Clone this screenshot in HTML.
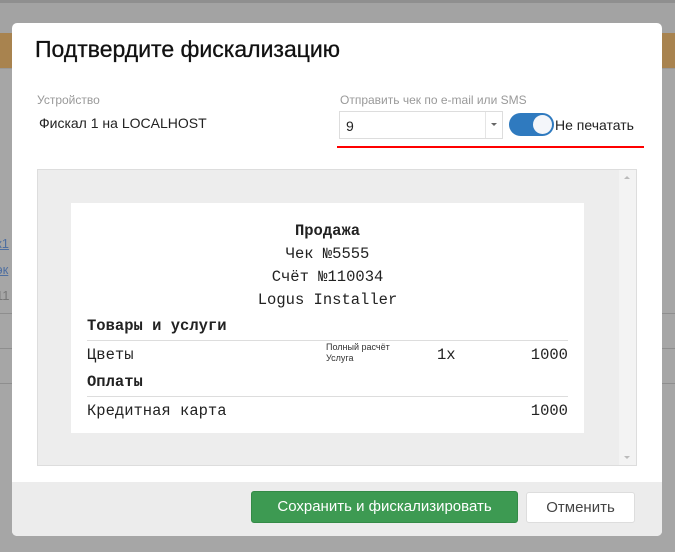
<!DOCTYPE html>
<html><head><meta charset="utf-8"><style>
*{box-sizing:border-box;margin:0;padding:0}
body{width:675px;height:552px;background:#a6a6a6;position:relative;overflow:hidden;font-family:"Liberation Sans","DejaVu Sans",sans-serif}
.abs{position:absolute}
.mono{font-family:"Courier New","Liberation Mono","DejaVu Sans Mono",monospace;font-size:15.5px;color:#222}
</style></head><body>
<div class="abs" style="left:0;top:0;width:675px;height:3px;background:#8f8f8f"></div>
<div class="abs" style="left:0;top:3px;width:675px;height:30px;background:#a3a3a3"></div>
<div class="abs" style="left:0;top:33px;width:675px;height:35px;background:#a8834f"></div>
<div class="abs" style="left:0;top:68px;width:675px;height:1px;background:#999"></div>
<div class="abs" style="left:0;top:313px;width:675px;height:1px;background:#8e8e8e"></div>
<div class="abs" style="left:0;top:348px;width:675px;height:1px;background:#8e8e8e"></div>
<div class="abs" style="left:0;top:383px;width:675px;height:1px;background:#8e8e8e"></div>
<div class="abs" style="left:-4px;top:236px;font-size:13px;color:#4f6fa0;text-decoration:underline">к1</div>
<div class="abs" style="left:-4px;top:262px;font-size:13px;color:#4f6fa0;text-decoration:underline">эк</div>
<div class="abs" style="left:-4px;top:288px;font-size:13px;color:#777">11</div>

<div class="abs" style="left:12px;top:23px;width:650px;height:513px;background:#fff;border-radius:5px;overflow:hidden">
  <div class="abs" style="left:23px;top:13px;font-size:23px;color:#111;-webkit-text-stroke:0.3px #111">Подтвердите фискализацию</div>
  <div class="abs" style="left:25px;top:70px;font-size:12px;color:#999">Устройство</div>
  <div class="abs" style="left:27px;top:92px;font-size:14px;color:#222">Фискал 1 на LOCALHOST</div>
  <div class="abs" style="left:328px;top:70px;font-size:12px;color:#999">Отправить чек по e-mail или SMS</div>
  <div class="abs" style="left:327px;top:88px;width:164px;height:28px;border:1px solid #ddd;background:#fff">
    <div class="abs" style="left:6px;top:6px;font-size:14px;color:#222">9</div>
    <div class="abs" style="left:145px;top:0;width:1px;height:26px;background:#e5e5e5"></div>
    <div class="abs" style="left:151px;top:11px;width:0;height:0;border-left:3px solid transparent;border-right:3px solid transparent;border-top:3px solid #666"></div>
  </div>
  <div class="abs" style="left:497px;top:90px;width:45px;height:23px;border-radius:12px;background:#2f7abf">
    <div class="abs" style="left:24px;top:2px;width:19px;height:19px;border-radius:50%;background:#f4f6fa"></div>
  </div>
  <div class="abs" style="left:543px;top:94px;font-size:14px;color:#222">Не печатать</div>
  <div class="abs" style="left:325px;top:123px;width:307px;height:2px;background:#f00"></div>

  <div class="abs" style="left:25px;top:146px;width:600px;height:297px;background:#ededed;border:1px solid #ddd">
    <div class="abs" style="right:0;top:0;width:17px;height:295px;background:#f3f3f3"></div>
    <div class="abs" style="right:6px;top:6px;border-left:3px solid transparent;border-right:3px solid transparent;border-bottom:3px solid #bbb"></div>
    <div class="abs" style="right:6px;bottom:6px;border-left:3px solid transparent;border-right:3px solid transparent;border-top:3px solid #bbb"></div>
    <div class="abs" style="left:33px;top:33px;width:513px;height:230px;background:#fff">
      <div class="abs mono" style="left:0;width:100%;top:19px;text-align:center;font-weight:bold">Продажа</div>
      <div class="abs mono" style="left:0;width:100%;top:42px;text-align:center">Чек №5555</div>
      <div class="abs mono" style="left:0;width:100%;top:65px;text-align:center">Счёт №110034</div>
      <div class="abs mono" style="left:0;width:100%;top:88px;text-align:center">Logus Installer</div>
      <div class="abs mono" style="left:16px;top:114px;font-weight:bold">Товары и услуги</div>
      <div class="abs" style="left:16px;top:137px;width:481px;height:1px;background:#ddd"></div>
      <div class="abs mono" style="left:16px;top:143px">Цветы</div>
      <div class="abs" style="left:255px;top:139px;font-size:9px;line-height:11px;color:#333">Полный расчёт<br>Услуга</div>
      <div class="abs mono" style="left:366px;top:143px">1x</div>
      <div class="abs mono" style="right:16px;top:143px">1000</div>
      <div class="abs mono" style="left:16px;top:170px;font-weight:bold">Оплаты</div>
      <div class="abs" style="left:16px;top:193px;width:481px;height:1px;background:#ddd"></div>
      <div class="abs mono" style="left:16px;top:199px">Кредитная карта</div>
      <div class="abs mono" style="right:16px;top:199px">1000</div>
    </div>
  </div>

  <div class="abs" style="left:0;top:459px;width:650px;height:54px;background:#ececec">
    <div class="abs" style="left:239px;top:9px;width:267px;height:32px;background:#3d9a52;border:1px solid #348a47;border-radius:3px;color:#fff;font-size:15px;text-align:center;line-height:30px">Сохранить и фискализировать</div>
    <div class="abs" style="left:514px;top:10px;width:109px;height:31px;background:#fff;border:1px solid #ddd;border-radius:3px;color:#444;font-size:15px;text-align:center;line-height:29px">Отменить</div>
  </div>
</div>
</body></html>
